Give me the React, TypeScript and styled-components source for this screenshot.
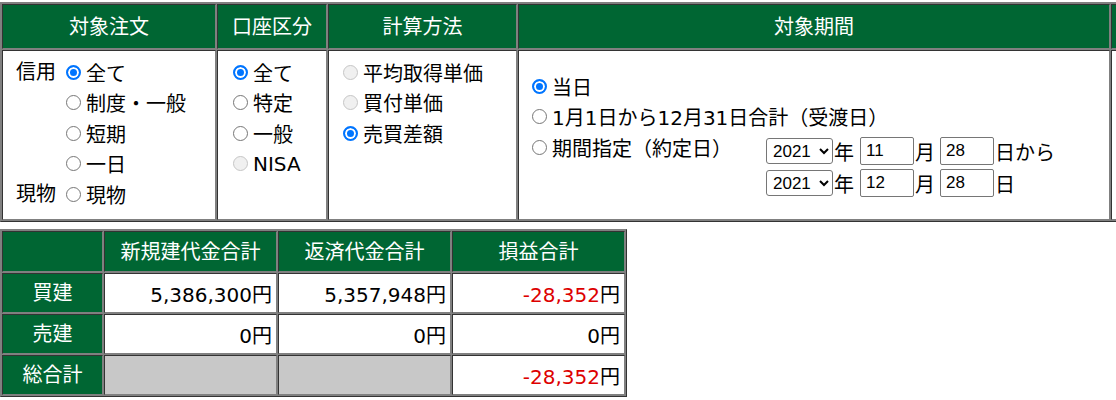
import React from 'react';
import styled, { createGlobalStyle } from 'styled-components';

const GlobalStyle = createGlobalStyle`
  html, body {
    margin: 0;
    overflow: hidden;
    background: #fff;
  }
  body {
    padding-top: 2px;
    font-family: "DejaVu Sans", "Noto Sans CJK JP", sans-serif;
    font-size: 20px;
    color: #000;
  }
`;

const Grid = styled.table<{ $width: number }>`
  width: ${(p) => p.$width}px;
  table-layout: fixed;
  border-collapse: separate;
  border-spacing: 1px;
  background: #808080;
  border: 1px solid;
  border-color: #808080 #333 #333 #808080;
`;

const SummaryGrid = styled(Grid)`
  margin-top: 7px;
`;

const Head = styled.th<{ $w?: number; $h: number }>`
  box-sizing: border-box;
  ${(p) => (p.$w ? `width: ${p.$w}px;` : '')}
  height: ${(p) => p.$h}px;
  padding: 0;
  background: #006633;
  color: #fff;
  font-weight: normal;
  text-align: center;
  vertical-align: middle;
  line-height: 1.3;
  border: 1px solid;
  border-color: #333 #808080 #808080 #333;
`;

const Cell = styled.td<{ $pl?: number; $middle?: boolean }>`
  box-sizing: border-box;
  height: 170px;
  padding: 6px 0 0 ${(p) => p.$pl ?? 14}px;
  background: #fff;
  vertical-align: ${(p) => (p.$middle ? 'middle' : 'top')};
  border: 1px solid;
  border-color: #333 #808080 #808080 #333;
`;

const PeriodCell = styled(Cell)`
  padding-top: 0;
`;

const Amount = styled.td<{ $gray?: boolean }>`
  box-sizing: border-box;
  height: 40px;
  padding: 0 4px 0 0;
  background: ${(p) => (p.$gray ? '#c8c8c8' : '#fff')};
  text-align: right;
  vertical-align: middle;
  border: 1px solid;
  border-color: #333 #808080 #808080 #333;
`;

const Minus = styled.span`
  color: #dd0000;
`;

const OrderGrid = styled.div`
  display: grid;
  grid-template-columns: 40px auto;
  column-gap: 10px;
  justify-content: start;
`;

const Kind = styled.span`
  line-height: 30.5px;
`;

const Option = styled.label`
  display: flex;
  align-items: center;
  height: 30.5px;
  white-space: nowrap;
`;

// Chrome-like radio, drawn a little larger than the native one
const Radio = styled.input.attrs({ type: 'radio' })`
  appearance: none;
  box-sizing: border-box;
  width: 15px;
  height: 15px;
  margin: 0 5px 0 0;
  flex: none;
  border-radius: 50%;
  border: 1px solid #767676;
  background: #fff;

  &:checked {
    border: 2px solid #0075ff;
    background: #0075ff;
    box-shadow: inset 0 0 0 2px #fff;
  }

  &:disabled {
    border-color: #c6c6c6;
    background: #f0f0f0;
  }
`;

const PeriodRow = styled.div`
  display: flex;
  align-items: flex-start;
`;

const PeriodLabel = styled(Option)`
  width: 234px;
  flex: none;
`;

const Dates = styled.div`
  margin-top: 3px;
`;

const DateRow = styled.div`
  display: flex;
  align-items: center;
  height: 32px;
  white-space: nowrap;
`;

const YearSelect = styled.select`
  box-sizing: border-box;
  width: 67px;
  height: 26px;
  margin: 0;
  padding: 0 0 0 2px;
  font: 17px "Liberation Sans", Arial, sans-serif;
  color: #000;
  background: #fff;
  border: 1px solid #767676;
  border-radius: 3px;
`;

const DayInput = styled.input.attrs({ type: 'text' })`
  box-sizing: border-box;
  width: 54px;
  height: 28px;
  margin: 0;
  padding: 0 5px;
  font: 17px "Liberation Sans", Arial, sans-serif;
  color: #000;
  border: 1px solid #767676;
  border-radius: 2px;
`;

const Unit = styled.span<{ $after?: number }>`
  margin: 0 ${(p) => p.$after ?? 0}px 0 1px;
`;

const DateLine = ({ month, last }: { month: string; last: string }) => (
  <DateRow>
    <YearSelect defaultValue="2021">
      <option>2020</option>
      <option>2021</option>
    </YearSelect>
    <Unit $after={6}>年</Unit>
    <DayInput defaultValue={month} />
    <Unit $after={5}>月</Unit>
    <DayInput defaultValue="28" />
    <Unit>{last}</Unit>
  </DateRow>
);

const rows = [
  { label: '買建', open: '5,386,300', close: '5,357,948', pl: '-28,352' },
  { label: '売建', open: '0', close: '0', pl: '0' },
];

const Yen = ({ v }: { v: string }) =>
  v.startsWith('-') ? (
    <>
      <Minus>{v}</Minus>円
    </>
  ) : (
    <>{v}円</>
  );

export default function App() {
  return (
    <>
      <GlobalStyle />
      <Grid $width={1413}>
        <thead>
          <tr>
            <Head $w={214} $h={45}>対象注文</Head>
            <Head $w={110} $h={45}>口座区分</Head>
            <Head $w={189} $h={45}>計算方法</Head>
            <Head $w={592} $h={45}>対象期間</Head>
            <Head $w={300} $h={45} />
          </tr>
        </thead>
        <tbody>
          <tr>
            <Cell $pl={13}>
              <OrderGrid>
                <Kind>信用</Kind>
                <Option><Radio name="order" defaultChecked />全て</Option>
                <span />
                <Option><Radio name="order" />制度・一般</Option>
                <span />
                <Option><Radio name="order" />短期</Option>
                <span />
                <Option><Radio name="order" />一日</Option>
                <Kind>現物</Kind>
                <Option><Radio name="order" />現物</Option>
              </OrderGrid>
            </Cell>
            <Cell $pl={15}>
              <Option><Radio name="account" defaultChecked />全て</Option>
              <Option><Radio name="account" />特定</Option>
              <Option><Radio name="account" />一般</Option>
              <Option><Radio name="account" disabled />NISA</Option>
            </Cell>
            <Cell>
              <Option><Radio name="calc" disabled />平均取得単価</Option>
              <Option><Radio name="calc" disabled />買付単価</Option>
              <Option><Radio name="calc" defaultChecked />売買差額</Option>
            </Cell>
            <PeriodCell $pl={13} $middle>
              <Option><Radio name="period" defaultChecked />当日</Option>
              <Option><Radio name="period" />1月1日から12月31日合計（受渡日）</Option>
              <PeriodRow>
                <PeriodLabel><Radio name="period" />期間指定（約定日）</PeriodLabel>
                <Dates>
                  <DateLine month="11" last="日から" />
                  <DateLine month="12" last="日" />
                </Dates>
              </PeriodRow>
            </PeriodCell>
            <Cell />
          </tr>
        </tbody>
      </Grid>

      <SummaryGrid $width={627}>
        <thead>
          <tr>
            <Head $w={101} $h={41} />
            <Head $w={173} $h={41}>新規建代金合計</Head>
            <Head $w={173} $h={41}>返済代金合計</Head>
            <Head $w={173} $h={41}>損益合計</Head>
          </tr>
        </thead>
        <tbody>
          {rows.map((r) => (
            <tr key={r.label}>
              <Head $h={40}>{r.label}</Head>
              <Amount><Yen v={r.open} /></Amount>
              <Amount><Yen v={r.close} /></Amount>
              <Amount><Yen v={r.pl} /></Amount>
            </tr>
          ))}
          <tr>
            <Head $h={40}>総合計</Head>
            <Amount $gray />
            <Amount $gray />
            <Amount><Yen v="-28,352" /></Amount>
          </tr>
        </tbody>
      </SummaryGrid>
    </>
  );
}
